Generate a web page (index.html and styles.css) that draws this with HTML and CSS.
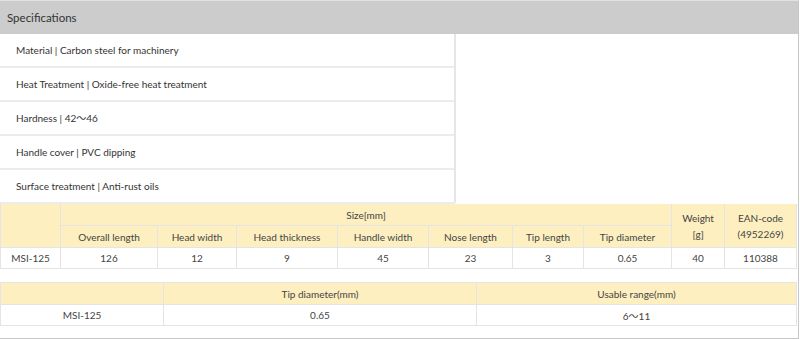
FILE: index.html
```html
<!DOCTYPE html>
<html lang="en">
<head>
  <meta charset="UTF-8">
  <meta name="viewport" content="width=device-width, initial-scale=1.0">
  <title>Specifications</title>
  <link rel="stylesheet" href="styles.css">
</head>
<body>
  <div class="panel">
    <div class="panel-heading">Specifications</div>

    <ul class="spec-list">
      <li>Material | Carbon steel for machinery</li>
      <li>Heat Treatment | Oxide-free heat treatment</li>
      <li>Hardness | 42～46</li>
      <li>Handle cover | PVC dipping</li>
      <li>Surface treatment | Anti-rust oils</li>
    </ul>

    <table class="spec-table size-table">
      <colgroup>
        <col style="width:60px">
        <col style="width:97px">
        <col style="width:79px">
        <col style="width:101px">
        <col style="width:91px">
        <col style="width:84px">
        <col style="width:71px">
        <col style="width:88px">
        <col style="width:53px">
        <col>
      </colgroup>
      <tr class="head">
        <th rowspan="2"></th>
        <th colspan="7">Size[mm]</th>
        <th rowspan="2" class="stack">Weight<br>[g]</th>
        <th rowspan="2" class="stack">EAN-code<br>(4952269)</th>
      </tr>
      <tr class="head">
        <th>Overall length</th>
        <th>Head width</th>
        <th>Head thickness</th>
        <th>Handle width</th>
        <th>Nose length</th>
        <th>Tip length</th>
        <th>Tip diameter</th>
      </tr>
      <tr>
        <td>MSI-125</td>
        <td>126</td>
        <td>12</td>
        <td>9</td>
        <td>45</td>
        <td>23</td>
        <td>3</td>
        <td>0.65</td>
        <td>40</td>
        <td>110388</td>
      </tr>
    </table>

    <table class="spec-table range-table">
      <colgroup>
        <col style="width:163px">
        <col style="width:313px">
        <col>
      </colgroup>
      <tr class="head">
        <th></th>
        <th>Tip diameter(mm)</th>
        <th>Usable range(mm)</th>
      </tr>
      <tr>
        <td>MSI-125</td>
        <td>0.65</td>
        <td>6～11</td>
      </tr>
    </table>
  </div>
</body>
</html>
```

FILE: styles.css
```css
body {
  margin: 0;
  font-family: Lato, "Noto Sans CJK JP", sans-serif;
  font-size: 10px;
  color: #333;
  background: #fff;
}
.panel {
  width: 798px;
  height: 337px;
  border-top: 1px solid #e2e2e2;
  border-right: 1px solid #c8c8c8;
  border-bottom: 1px solid #c8c8c8;
}
.panel-heading {
  height: 33px;
  line-height: 33px;
  padding-left: 7px;
  background-color: #cccccc;
  color: #333;
  font-size: 11.5px;
}
.spec-list {
  list-style: none;
  margin: 0;
  padding: 0;
  width: 456px;
  border-right: 2px solid #e6e6e6;
  border-bottom-right-radius: 3px;
  box-sizing: border-box;
  font-size: 10px;
}
.spec-list li {
  height: 34px;
  line-height: 33px;
  padding-left: 16px;
  border-bottom: 2px solid #ececec;
  box-sizing: border-box;
}
.spec-table {
  width: 797px;
  border-collapse: collapse;
  table-layout: fixed;
  color: #444;
}
.spec-table th,
.spec-table td {
  border: 1px solid #e4e4e4;
  text-align: center;
  font-weight: normal;
  padding: 0 4px;
  white-space: nowrap;
}
.spec-table .head th {
  background-color: #fdefc0;
  height: 21px;
}
.spec-table td {
  height: 20px;
}
.spec-table th.stack {
  line-height: 16px;
  vertical-align: middle;
}
.size-table tr:first-child th {
  border-top: none;
}
.range-table {
  margin-top: 13px;
}
```
